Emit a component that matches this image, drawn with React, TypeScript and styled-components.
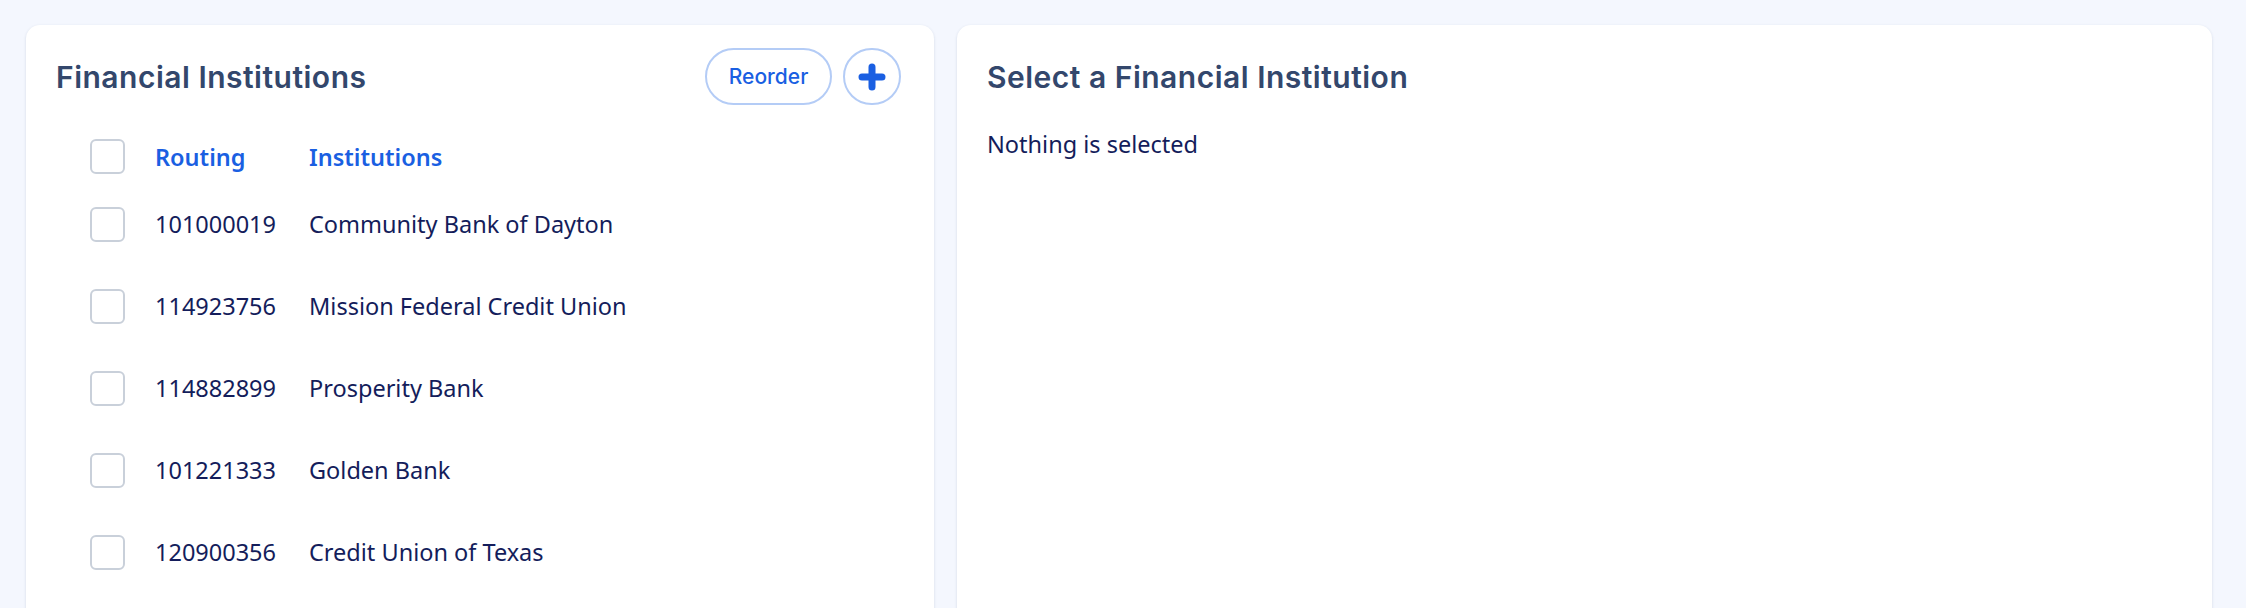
import * as React from 'react'
import styled, { createGlobalStyle } from 'styled-components'

const GlobalStyle = createGlobalStyle`
  html, body {
    margin: 0;
    padding: 0;
    background: #f4f7fe;
  }
  body {
    font-family: 'Noto Sans', 'Liberation Sans', sans-serif;
    overflow: hidden;
  }
`

const Page = styled.main`
  display: grid;
  grid-template-columns: 908px 1fr;
  gap: 23px;
  padding: 25px 34px 0 26px;
  height: 100vh;
  box-sizing: border-box;
`

const Card = styled.section`
  background: #ffffff;
  border-radius: 14px;
  box-shadow: 0 1px 3px rgba(40, 60, 100, 0.16);
  min-height: 640px;
  padding: 23px 33px 0 30px;
  box-sizing: border-box;
`

const CardHeader = styled.header`
  display: flex;
  align-items: center;
  justify-content: space-between;
  height: 57px;
`

const Title = styled.h2`
  margin: 0;
  font-family: Inter, 'Noto Sans', sans-serif;
  font-size: 30px;
  font-weight: 600;
  letter-spacing: 0.5px;
  color: #33476c;
`

const Actions = styled.div`
  display: flex;
  gap: 11px;
`

const PillButton = styled.button<{ $round?: boolean }>`
  display: flex;
  align-items: center;
  justify-content: center;
  height: 57px;
  width: ${(p) => (p.$round ? '58px' : '127px')};
  padding: 0;
  border: 2px solid #b4ccf6;
  border-radius: 29px;
  background: #ffffff;
  color: #1a5fe2;
  font-family: Inter, 'Noto Sans', sans-serif;
  font-size: 21px;
  font-weight: 500;
  cursor: pointer;
`

const Table = styled.div`
  margin-top: 34px;
  padding-left: 34px;
`

const Row = styled.div<{ $head?: boolean }>`
  display: grid;
  grid-template-columns: 35px 124px 1fr;
  column-gap: 30px;
  align-items: center;
  height: ${(p) => (p.$head ? '35px' : '82px')};
  margin-bottom: ${(p) => (p.$head ? '9px' : '0')};
  font-size: 23.5px;
  font-weight: ${(p) => (p.$head ? 600 : 400)};
  color: ${(p) => (p.$head ? '#1a5fe2' : '#141d5b')};
`

const Check = styled.span`
  width: 35px;
  height: 35px;
  box-sizing: border-box;
  border: 2px solid #c9d0da;
  border-radius: 6px;
  background: #ffffff;
`

const Empty = styled.p`
  margin: 23px 0 0;
  font-size: 23.5px;
  color: #141d5b;
`

const institutions = [
  { routing: '101000019', name: 'Community Bank of Dayton' },
  { routing: '114923756', name: 'Mission Federal Credit Union' },
  { routing: '114882899', name: 'Prosperity Bank' },
  { routing: '101221333', name: 'Golden Bank' },
  { routing: '120900356', name: 'Credit Union of Texas' },
]

const PlusIcon = () => (
  <svg width="28" height="28" viewBox="0 0 28 28" fill="none">
    <path d="M14 4v20M4 14h20" stroke="#1a5fe2" strokeWidth="7" strokeLinecap="round" />
  </svg>
)

const App: React.FC = () => {
  return (
    <>
      <GlobalStyle />
      <Page>
        <Card>
          <CardHeader>
            <Title>Financial Institutions</Title>
            <Actions>
              <PillButton>Reorder</PillButton>
              <PillButton $round aria-label="Add">
                <PlusIcon />
              </PillButton>
            </Actions>
          </CardHeader>
          <Table>
            <Row $head>
              <Check />
              <span>Routing</span>
              <span>Institutions</span>
            </Row>
            {institutions.map((item) => (
              <Row key={item.routing}>
                <Check />
                <span>{item.routing}</span>
                <span>{item.name}</span>
              </Row>
            ))}
          </Table>
        </Card>
        <Card>
          <CardHeader>
            <Title>Select a Financial Institution</Title>
          </CardHeader>
          <Empty>Nothing is selected</Empty>
        </Card>
      </Page>
    </>
  )
}

export default App
